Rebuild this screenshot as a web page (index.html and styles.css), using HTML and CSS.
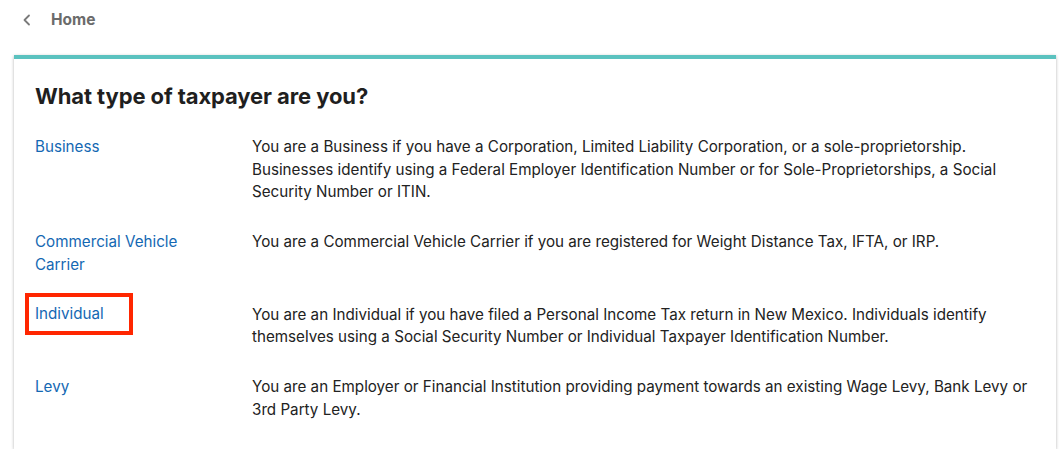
FILE: index.html
```html
<!DOCTYPE html>
<html lang="en">
<head>
    <meta charset="UTF-8">
    <meta name="viewport" content="width=device-width, initial-scale=1.0">
    <title>Taxpayer Type</title>
    <link rel="stylesheet" href="styles.css">
</head>
<body>
<nav class="crumb">
    <a href="#" class="crumb-back">
        <svg width="10" height="14" viewBox="0 0 10 14" aria-hidden="true">
            <path d="M7 2.5 L2.5 7 L7 11.5" fill="none" stroke="#7a7a7a" stroke-width="1.8" stroke-linecap="round" stroke-linejoin="round"/>
        </svg>
        <span>Home</span>
    </a>
</nav>

<section class="card">
    <h1>What type of taxpayer are you?</h1>

    <div class="types">
        <div class="type-row">
            <a href="#" class="type-link">Business</a>
            <p>You are a Business if you have a Corporation, Limited Liability Corporation, or a sole-proprietorship.<br>Businesses identify using a Federal Employer Identification Number or for Sole-Proprietorships, a Social Security Number or ITIN.</p>
        </div>
        <div class="type-row">
            <a href="#" class="type-link">Commercial Vehicle Carrier</a>
            <p>You are a Commercial Vehicle Carrier if you are registered for Weight Distance Tax, IFTA, or IRP.</p>
        </div>
        <div class="type-row">
            <a href="#" class="type-link highlighted">Individual</a>
            <p>You are an Individual if you have filed a Personal Income Tax return in New Mexico. Individuals identify themselves using a Social Security Number or Individual Taxpayer Identification Number.</p>
        </div>
        <div class="type-row">
            <a href="#" class="type-link">Levy</a>
            <p>You are an Employer or Financial Institution providing payment towards an existing Wage Levy, Bank Levy or 3rd Party Levy.</p>
        </div>
    </div>
</section>
</body>
</html>
```

FILE: styles.css
```css
body {
    font-family: Inter, "Liberation Sans", sans-serif;
    color: #222;
    background: #fff;
    margin: 0;
    padding: 0;
}

.crumb {
    height: 39px;
    padding-left: 22px;
    display: flex;
    align-items: center;
}

.crumb-back {
    display: flex;
    align-items: center;
    gap: 19px;
    color: #6b6b6b;
    font-weight: 700;
    font-size: 15.5px;
    text-decoration: none;
}

.card {
    margin: 16px 6px 0 14px;
    border-top: 4px solid #5bc2bf;
    box-shadow: 0 1px 3px rgba(0, 0, 0, 0.3);
    padding: 24px 21px 20px;
    height: 394px;
    box-sizing: border-box;
}

h1 {
    font-size: 22px;
    font-weight: 700;
    color: #1f1f1f;
    letter-spacing: -0.1px;
    margin: 0 0 27px;
}

.types {
    display: flex;
    flex-direction: column;
    gap: 27px;
}

.type-row {
    display: grid;
    grid-template-columns: 217px 1fr;
    font-size: 15.2px;
    line-height: 22.7px;
}

.type-row p {
    margin: 0;
}

.type-link {
    color: #1468b3;
    text-decoration: none;
    justify-self: start;
    align-self: start;
    max-width: 160px;
}

.highlighted {
    outline: 4px solid #ff2600;
    outline-offset: 6px;
    padding-right: 19px;
    margin-top: -1px;
}
```
